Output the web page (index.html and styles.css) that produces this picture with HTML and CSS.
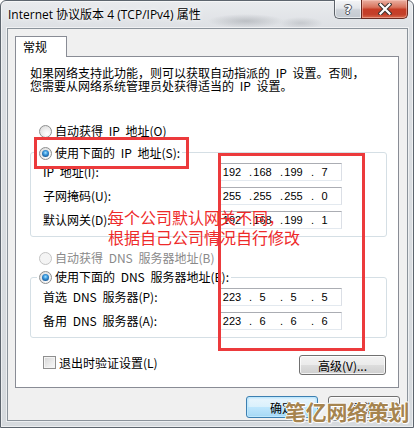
FILE: index.html
```html
<!DOCTYPE html>
<html lang="zh-CN">
<head>
<meta charset="utf-8">
<title>Internet 协议版本 4 (TCP/IPv4) 属性</title>
<link rel="stylesheet" href="styles.css">
</head>
<body>
<div class="window">
  <div class="titlebar">
    <span class="title">Internet 协议版本 4 (TCP/IPv4) 属性</span>
    <div class="caption-btns">
      <div class="cbtn help"><span>?</span></div>
      <div class="cbtn close">
        <svg width="14" height="12" viewBox="0 0 14 12">
          <path d="M2.5 1.5 L11.5 10.5 M11.5 1.5 L2.5 10.5" stroke="#3d3430" stroke-width="4.2" stroke-linecap="square" fill="none"/>
          <path d="M2.5 1.5 L11.5 10.5 M11.5 1.5 L2.5 10.5" stroke="#ffffff" stroke-width="2.2" stroke-linecap="square" fill="none"/>
        </svg>
      </div>
    </div>
  </div>
  <div class="client">
    <div class="tab">常规</div>
    <div class="page">
      <p class="desc">如果网络支持此功能，则可以获取自动指派的 IP 设置。否则，<br>您需要从网络系统管理员处获得适当的 IP 设置。</p>

      <div class="opt"><span class="radio"></span><span>自动获得 IP 地址(O)</span></div>

      <div class="group">
        <div class="opt legend"><span class="radio checked"></span><span>使用下面的 IP 地址(S):</span></div>
        <div class="fields">
          <div class="field"><span class="label">IP 地址(I):</span>
            <div class="ipbox"><span class="seg">192</span><span class="seg">168</span><span class="seg">199</span><span class="seg">7</span></div></div>
          <div class="field"><span class="label">子网掩码(U):</span>
            <div class="ipbox"><span class="seg">255</span><span class="seg">255</span><span class="seg">255</span><span class="seg">0</span></div></div>
          <div class="field"><span class="label">默认网关(D):</span>
            <div class="ipbox"><span class="seg">192</span><span class="seg">168</span><span class="seg">199</span><span class="seg">1</span></div></div>
        </div>
      </div>

      <div class="opt opt-dns disabled"><span class="radio"></span><span>自动获得 DNS 服务器地址(B)</span></div>

      <div class="group group-dns">
        <div class="opt legend"><span class="radio checked"></span><span>使用下面的 DNS 服务器地址(E):</span></div>
        <div class="fields">
          <div class="field"><span class="label">首选 DNS 服务器(P):</span>
            <div class="ipbox"><span class="seg">223</span><span class="seg">5</span><span class="seg">5</span><span class="seg">5</span></div></div>
          <div class="field"><span class="label">备用 DNS 服务器(A):</span>
            <div class="ipbox"><span class="seg">223</span><span class="seg">6</span><span class="seg">6</span><span class="seg">6</span></div></div>
        </div>
      </div>

      <div class="bottom-row">
        <div class="check"><span class="checkbox"></span><span>退出时验证设置(L)</span></div>
        <div class="btn adv">高级(V)...</div>
      </div>
    </div>
    <div class="actions">
      <div class="btn default">确定</div>
      <div class="btn">取消</div>
    </div>
  </div>

  <div class="mark mark-radio"></div>
  <div class="mark mark-inputs"></div>
  <div class="note">每个公司默认网关不同，<br>根据自己公司情况自行修改</div>
  <div class="watermark">笔亿网络策划</div>
</div>
</body>
</html>
```
FILE: styles.css
```css
html, body {
  margin: 0;
  padding: 0;
  background: #ffffff;
}

body {
  font-family: "Noto Sans CJK SC", "Noto Sans", sans-serif;
  font-size: 12px;
  color: #000;
}

.window {
  position: relative;
  width: 414px;
  height: 428px;
  box-sizing: border-box;
  border: 1px solid #5d656e;
  border-radius: 6px 6px 0 0;
  background:
    radial-gradient(ellipse 38px 7px at 245px 20px, rgba(95, 100, 108, 0.28), rgba(95, 100, 108, 0) 100%),
    radial-gradient(ellipse 22px 6px at 300px 22px, rgba(95, 100, 108, 0.2), rgba(95, 100, 108, 0) 100%),
    linear-gradient(#e9ebee 0, #dcdfe3 30px, #d6dade 100%);
  box-shadow: inset 0 0 0 1px rgba(255, 255, 255, 0.55);
  padding: 0 5px 6px 6px;
  display: flex;
  flex-direction: column;
}

/* ---------- title bar ---------- */
.titlebar {
  height: 27px;
  display: flex;
  justify-content: space-between;
  align-items: flex-start;
  flex-shrink: 0;
}

.title {
  font-family: "Open Sans", "Noto Sans CJK SC", sans-serif;
  font-size: 12px;
  line-height: 17px;
  margin-top: 5px;
  padding-left: 1px;
  color: #000;
  text-shadow: 0 0 6px rgba(255, 255, 255, 0.95), 0 0 3px rgba(255, 255, 255, 0.9);
  white-space: nowrap;
}

.caption-btns {
  display: flex;
  margin-top: -1px;
}

.cbtn {
  height: 19px;
  box-sizing: border-box;
  display: flex;
  align-items: center;
  justify-content: center;
  border: 1px solid #5c6168;
  border-top: none;
}

.help {
  width: 27px;
  border-radius: 0 0 0 5px;
  border-right: none;
  background: linear-gradient(#f4f5f7 0, #e3e6ea 45%, #cdd2d8 55%, #c3c9d0 100%);
  box-shadow: inset 0 0 0 1px rgba(255, 255, 255, 0.6);
}

.help span {
  font-family: "DejaVu Sans", sans-serif;
  font-weight: bold;
  font-size: 13px;
  line-height: 13px;
  color: #fff;
  text-shadow: 1px 0 0 #4a4f57, -1px 0 0 #4a4f57, 0 1px 0 #4a4f57, 0 -1px 0 #4a4f57;
}

.close {
  width: 47px;
  border-radius: 0 0 5px 0;
  border-color: #6a2a20;
  background: linear-gradient(#eab0a2 0, #d9745e 40%, #c63d27 52%, #c3402a 80%, #d96a4d 100%);
  box-shadow: inset 0 0 0 1px rgba(255, 210, 200, 0.45);
}

/* ---------- client ---------- */
.client {
  flex: 1;
  background: #f0f0f0;
  border: 1px solid #8b939b;
  box-shadow: 0 0 0 1px rgba(255, 255, 255, 0.55);
  padding: 7px 8px 0 7px;
  display: flex;
  flex-direction: column;
}

.tab {
  position: relative;
  z-index: 1;
  align-self: flex-start;
  width: 52px;
  height: 21px;
  box-sizing: border-box;
  margin-bottom: -1px;
  border: 1px solid #898c95;
  border-bottom: none;
  background: #fff;
  padding-left: 7px;
  line-height: 19px;
  font-size: 12px;
}

.page {
  height: 332px;
  box-sizing: border-box;
  border: 1px solid #898c95;
  background: #fff;
  padding: 9px 11px 0 14px;
  display: flex;
  flex-direction: column;
  word-spacing: 3px;
}

.desc {
  margin: 0;
  font-size: 12px;
  line-height: 13px;
  white-space: nowrap;
}

/* ---------- radio options ---------- */
.opt {
  display: flex;
  align-items: center;
  height: 16px;
  gap: 3px;
  padding-left: 9px;
  margin-top: 31px;
  white-space: nowrap;
  line-height: 16px;
}

.opt.disabled {
  color: #8a8a8a;
}

.radio {
  width: 13px;
  height: 13px;
  box-sizing: border-box;
  border-radius: 50%;
  border: 1px solid #8e8f8f;
  background: radial-gradient(circle at 65% 70%, #ffffff 0, #f0f0f0 40%, #d6d6d6 100%);
  display: flex;
  align-items: center;
  justify-content: center;
  flex-shrink: 0;
}

.radio.checked::after {
  content: "";
  width: 7px;
  height: 7px;
  border-radius: 50%;
  background: radial-gradient(circle at 50% 40%, #a9e4ff 0, #3d9be0 35%, #14528f 80%, #0f3e70 100%);
}

.disabled .radio {
  border-color: #c4c4c4;
  background: #f4f4f4;
}

/* ---------- group boxes ---------- */
.group {
  margin-top: 13px;
  border: 1px solid #d5dfe5;
  border-radius: 3px;
  padding: 0 0 7px 12px;
  display: flex;
  flex-direction: column;
}

.legend {
  align-self: flex-start;
  margin: -8px 0 0 -6px;
  padding: 0 2px;
  background: #fff;
}

.group-dns {
  margin-top: 11px;
}

.group-dns .legend {
  margin-top: -9px;
}

.opt-dns {
  margin-top: 13px;
}

.fields {
  display: flex;
  flex-direction: column;
  gap: 6px;
  margin-top: 2px;
}

.group-dns .fields {
  margin-top: 3px;
}

.field {
  display: flex;
  align-items: center;
  height: 18px;
}

.label {
  width: 177px;
  white-space: nowrap;
  line-height: 18px;
}

.ipbox {
  width: 122px;
  height: 18px;
  box-sizing: border-box;
  border: 1px solid;
  border-color: #abadb3 #dbdfe6 #e3e9ef #e2e3ea;
  background: #fff;
  display: flex;
  align-items: center;
  font-family: "Liberation Sans", "Noto Sans", sans-serif;
  font-size: 11px;
  word-spacing: 0;
}

.seg {
  position: relative;
  width: 31px;
  text-align: center;
  line-height: 16px;
}

.seg:first-child {
  width: 26px;
  box-sizing: border-box;
  padding-right: 4px;
}

.seg + .seg::before {
  content: ".";
  position: absolute;
  left: 2px;
  top: 0;
}

/* ---------- bottom of page ---------- */
.bottom-row {
  margin-top: 17px;
  display: flex;
  justify-content: space-between;
  align-items: flex-start;
  padding: 0 1px 0 13px;
}

.check {
  display: flex;
  align-items: center;
  gap: 3px;
  height: 15px;
  line-height: 15px;
  white-space: nowrap;
}

.checkbox {
  width: 13px;
  height: 13px;
  box-sizing: border-box;
  border: 1px solid #8f8f8f;
  background: linear-gradient(135deg, #d4d4d4 0, #ececec 60%, #fafafa 100%);
  box-shadow: inset 0 0 0 1px #f4f4f4;
}

.btn {
  height: 22px;
  width: 72px;
  box-sizing: border-box;
  border: 1px solid #707070;
  border-radius: 3px;
  background: linear-gradient(#f2f2f2 0, #ebebeb 50%, #dddddd 51%, #cfcfcf 100%);
  box-shadow: inset 0 0 0 1px rgba(255, 255, 255, 0.75);
  display: flex;
  align-items: center;
  justify-content: center;
  font-size: 12px;
  white-space: nowrap;
  word-spacing: 0;
}

.btn.adv {
  width: 87px;
  height: 20px;
}

.actions {
  display: flex;
  justify-content: flex-end;
  gap: 10px;
  margin-top: 8px;
  margin-right: -1px;
}

.btn.default {
  border-color: #3c7fb1;
  background: linear-gradient(#eaf6fd 0, #d9f0fc 50%, #bee6fd 51%, #a7d9f5 100%);
  box-shadow: inset 0 0 0 1px #bfe8fd, inset 0 0 2px 1px #9fd7f7;
}

/* ---------- overlays ---------- */
.mark {
  position: absolute;
  box-sizing: border-box;
  border: 3px solid #ec3a3c;
  z-index: 5;
}

.mark-radio {
  left: 33px;
  top: 136px;
  width: 155px;
  height: 32px;
}

.mark-inputs {
  left: 217px;
  top: 152px;
  width: 147px;
  height: 198px;
}

.note {
  position: absolute;
  left: 107px;
  top: 206px;
  z-index: 6;
  color: #ee2a2a;
  font-size: 16px;
  line-height: 20px;
  white-space: nowrap;
}

.watermark {
  position: absolute;
  left: 284px;
  top: 397px;
  z-index: 7;
  font-family: "Noto Sans CJK SC", sans-serif;
  font-weight: bold;
  font-size: 21px;
  line-height: 26px;
  letter-spacing: -0.3px;
  color: #a6844f;
  text-shadow: 1px 0 0 #fff, -1px 0 0 #fff, 0 1px 0 #fff, 0 -1px 0 #fff, 1px 1px 1px rgba(255,255,255,0.9);
  white-space: nowrap;
}
```
